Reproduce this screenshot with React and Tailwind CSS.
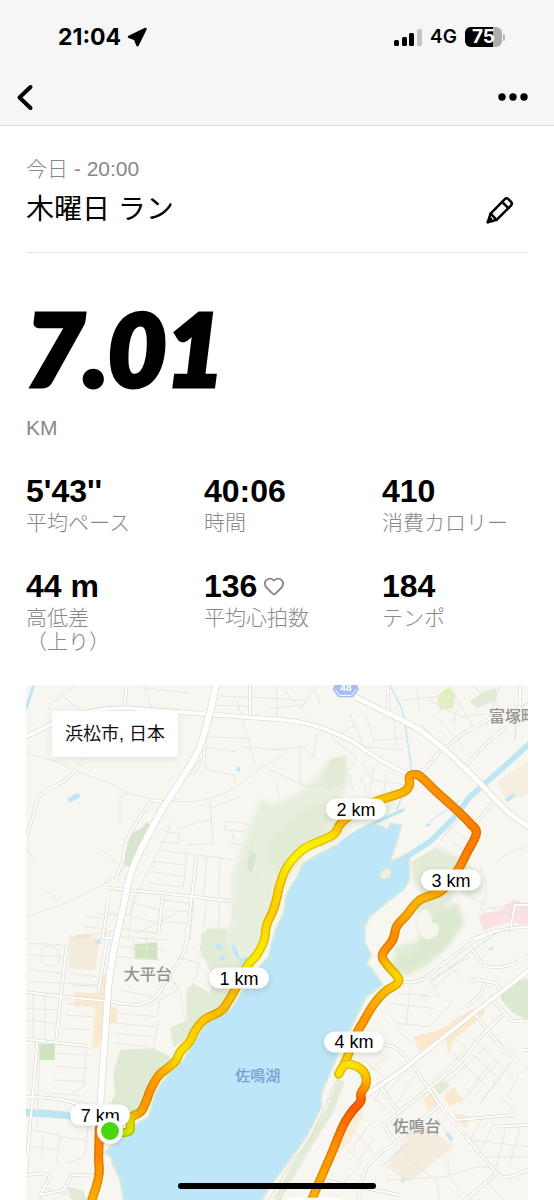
import React from "react";
import { Heart } from "lucide-react";

const stats = [
  { label: "平均ペース", value: "5'43''" },
  { label: "時間", value: "40:06" },
  { label: "消費カロリー", value: "410" },
  { label: "高低差（上り）", value: "44 m" },
  { label: "平均心拍数", value: "136", heart: true },
  { label: "テンポ", value: "184" },
];

// Map drawing units: three per pixel at the base width.
const VIEW = { x: 18, y: 15, w: 1506, h: 1545 };

const outbound = [
  [310, 1358, "#b4e00a"], [330, 1350, "#c8e600"], [333, 1314, "#e8dc00"], [362, 1295, "#f5a800"],
  [378, 1265, "#fd9a00"], [392, 1228, "#ff9200"], [416, 1187, "#ff9f00"], [446, 1162, "#fbb800"],
  [466, 1144, "#f8cc00"], [482, 1114, "#fbdf00"], [508, 1086, "#ffd800"], [528, 1048, "#ffd000"],
  [555, 1018, "#ffc800"], [602, 993, "#fdb900"], [626, 962, "#fdb900"], [650, 920, "#fdc000"],
  [682, 858, "#fbe800"], [710, 825, "#fde800"], [732, 782, "#ffe600"], [740, 735, "#ffd800"],
  [760, 690, "#ffd000"], [770, 655, "#ffd000"], [778, 620, "#ffd200"], [795, 572, "#ffdc00"],
  [822, 534, "#fff000"], [862, 500, "#fff200"], [938, 465, "#ffe400"], [967, 425, "#fdb900"],
  [1030, 382, "#fdb900"], [1080, 360, "#ffc800"], [1148, 337, "#fdb900"], [1168, 316, "#fdb000"],
  [1168, 292, "#fda800"], [1180, 284, "#ffa000"], [1202, 290, "#ff9a00"], [1250, 336, "#ff9200"],
  [1310, 390, "#ff8a00"], [1350, 430, "#ff8200"], [1369, 460, "#ff7a00"], [1340, 520, "#ff7c00"],
  [1312, 572, "#ff8a00"], [1265, 632, "#ffa000"], [1200, 660, "#fdb400"], [1160, 705, "#fdac00"],
  [1130, 740, "#fd9800"], [1118, 780, "#ff8a00"], [1087, 825, "#ff9400"], [1102, 855, "#fdb400"],
  [1134, 893, "#fdd600"], [1130, 912, "#fdce00"], [1094, 936, "#fdbc00"], [1060, 975, "#fdac00"],
  [1030, 1025, "#ff9800"], [1008, 1065, "#ffa000"], [978, 1140, "#fdcc00"], [956, 1182, "#fbe000"],
];

const homebound = [
  [956, 1182, "#fbe000"], [975, 1155, "#fbe000"], [1008, 1158, "#fde400"], [1034, 1180, "#fdd000"],
  [1038, 1212, "#fdb400"], [1023, 1240, "#ff8a00"], [1022, 1264, "#ff6a00"], [995, 1296, "#ff5a00"],
  [968, 1340, "#ff7000"], [935, 1420, "#ff9200"], [900, 1500, "#ffa400"], [873, 1565, "#ffb000"],
];

const finish = [
  [238, 1345, "#ff8a00"], [236, 1430, "#ff8600"], [236, 1490, "#ff9800"], [214, 1565, "#ffac00"],
];

const minorRoads = [
  // north-west hills
  "M18 215C60 240 100 235 130 255C180 290 260 290 310 335C400 365 460 365 520 365C600 355 660 320 700 280L790 225",
  "M85 90C90 60 150 40 165 15M130 50L185 95M370 15L400 100M380 25L510 40M600 48L770 55M590 75L700 80",
  "M690 15V110M770 15V115M650 60L705 250M665 200L790 210M555 170L690 175M540 200L650 215",
  "M555 245L560 270L640 285L650 310M18 710C120 680 240 630 310 570M245 510L310 565M75 628L115 665",
  "M300 430V350L330 340M18 500L45 545M440 410L480 445L540 425L575 420M570 365L580 490M575 385L660 350",
  // terraces
  "M450 430L440 470L400 540L350 640L330 700M430 455L480 460L475 490L420 485M415 510L500 520L490 620L385 610",
  "M400 545L495 555M395 575L490 590M500 520L640 540M560 530L550 650M600 535L595 655M500 495L580 490",
  "M615 425L680 430L675 455L615 450ZM640 460L635 490L665 493M340 650L325 780M430 660L510 670M520 660L510 780",
  "M435 690L500 695M435 725L500 730M560 660L550 745M600 665L595 750M640 670L635 740M230 700L330 705M180 770L330 745",
  "M345 670L420 690M335 710L420 730M330 750L415 760M200 710L245 715M190 740L245 745",
  // west side
  "M30 790L130 795M30 825L130 830M30 870L130 880M30 905L245 915M40 945V1080M75 945V1080M18 985L120 990",
  "M18 1020L115 1030M150 880L230 890M155 915L240 920M140 970L225 975M135 1005L220 1010M130 1045L215 1050",
  "M110 1120L210 1125M110 1160L205 1165M100 1200L200 1205M90 1240L180 1245M200 1100L190 1220L150 1245",
  "M70 1260C130 1250 190 1260 240 1290M60 1090L50 1340M30 1350L120 1365L110 1450M70 1365L65 1430M30 1400L115 1410",
  "M120 1370L200 1380M205 1330L195 1430L140 1450M60 1520L200 1560M90 1480L60 1560M65 815C65 790 120 790 120 835C120 865 65 865 65 835Z",
  "M290 830L420 840M310 870L410 880M290 1000L410 1010M290 1030L405 1040M285 1060L400 1070M280 1090L390 1100",
  "M410 1010L420 960L470 930M400 1110L415 1020M300 770L440 780M300 800L430 810M340 770V830M380 770V830M440 880C500 940 480 980 500 1030",
  "M470 830L540 850L520 900M520 800L545 830M300 930L400 950M350 760L470 700",
  // north centre
  "M750 55L860 60M790 30L870 110M750 85L850 75L880 30M880 15L900 75M990 100L1030 200L1150 210M1040 110L1060 180L1150 175",
  "M1010 130L950 170M930 170L1010 230L990 270M1120 100L1130 200M1150 60L1250 50M1190 30L1200 100M1250 110L1330 200M1200 130L1300 230",
  "M1230 60L1320 110L1400 100M1300 40L1360 140M1360 20L1440 80M1440 20L1400 140M1480 60L1500 140M1320 60L1300 130",
  "M1025 250L1060 300L1160 315M1020 290L1040 340M1060 260L1050 330M1100 280L1090 350M980 260L1000 330M750 210L850 200L890 240M750 270L860 320L930 310",
  "M760 300L780 350M840 200V320M890 160L880 230M1270 460L1340 520M1290 440L1350 490M1250 490L1320 550M1310 420L1260 480M1340 400L1280 460",
  "M1380 560C1410 620 1400 660 1380 690L1500 670M1430 550C1450 520 1490 510 1520 500M1350 650L1430 690M1390 700L1500 700M1470 680V760",
  // south-east
  "M1100 990L1130 1030L1230 1040L1300 960M1130 940L1250 950M1110 970L1240 985M1170 920L1160 1030M1230 900L1260 950M1200 960L1290 880M1270 840L1330 900",
  "M1230 900L1350 830M1050 1100L1110 1140M1030 1140L1090 1190M1010 1200L1060 1160M1090 1130L1040 1190M1120 1190L1060 1260M1190 1100L1130 1050",
  "M1160 1170L1100 1240M1180 1190L1130 1270M1240 1210L1200 1260M1270 1090L1400 1220M1300 1070L1440 1200M1330 1050L1480 1190M1340 1110L1240 1200",
  "M1400 1100L1280 1210M1440 1140L1320 1270M1400 1050L1500 1140M1410 1150L1340 1240M1460 1250L1500 1180L1524 1160M1440 1250L1490 1300",
  "M1250 1310L1300 1390M1390 1310L1350 1380M1420 1330L1380 1420M1460 1330L1430 1460M1500 1340L1470 1450M1350 1380L1524 1400M1380 1430L1524 1430",
  "M1150 1430L1250 1500L1260 1560M1290 1430C1270 1480 1300 1520 1360 1560M1100 1500L1280 1490C1340 1470 1400 1440 1440 1480M1400 1500L1450 1560",
  "M1050 1330L1000 1400M1060 1380L1010 1450M1030 1440L980 1500M1000 1350L1060 1420M980 1410L1020 1440M1100 1290L1050 1240",
];

const streets = [
  "M320 15L312 95M690 15L690 110M190 230C190 250 160 280 130 305C80 330 50 340 45 380C40 420 25 440 18 480",
  "M555 170L552 235L520 275L505 280M435 370C410 355 395 360 385 375C360 410 330 450 315 495L312 530L290 590",
  "M530 530L500 780M258 622L320 630L430 640L520 650L632 663M428 645L415 765M265 655L248 775H285",
  "M265 755L235 935M18 936L130 950L260 963C330 975 380 990 420 935C450 870 490 850 500 780V750M140 792L108 1085",
  "M18 1078L202 1098M52 1085L18 1480M18 1250C80 1250 170 1260 200 1290M18 1485L75 1480L90 1490L60 1545L130 1530L155 1485L220 1487",
  "M1105 15V100M1170 285C1220 275 1230 250 1260 215L1330 160L1420 110M1335 260L1400 190L1460 140M1500 15L1500 110M1420 370L1360 435",
  "M1150 905C1200 915 1220 890 1260 860L1345 795C1370 775 1400 765 1430 750M1345 795L1390 855C1430 870 1480 860 1524 825",
  "M1350 780C1400 760 1440 745 1524 740M1472 740L1485 675H1524M1345 910L1370 898L1430 910L1440 930M1395 910L1385 940L1340 980",
  "M1410 950L1475 1022H1524M1360 995L1475 1145M1450 1005L1390 1060C1350 1110 1330 1150 1270 1190L1090 1335L1125 1385",
  "M1090 1095C1130 1095 1150 1120 1180 1160L1270 1290L1430 1480C1450 1500 1480 1490 1524 1470M1085 1225L1135 1295",
  "M1265 1270L1125 1390C1060 1430 1020 1460 1015 1560M1310 1320L1480 1305M1425 1340L1524 1335M1430 1480L1330 1565M1510 1110H1524M910 1500L1140 1545",
];

const mainRoads = [
  { d: "M18 170L90 135C180 100 240 80 320 85C450 92 560 105 780 118C880 130 920 145 1000 185C1060 230 1110 260 1170 285", w: 11 },
  { d: "M1005 50C1080 90 1130 110 1200 150C1280 210 1310 240 1400 330C1450 390 1490 420 1535 445", w: 15 },
  { d: "M1015 1262L1160 1160L1380 985L1535 865", w: 11 },
];

function mixColor(a, b, t) {
  const channel = (hex, i) => parseInt(hex.slice(1 + i * 2, 3 + i * 2), 16);
  return "rgb(" + [0, 1, 2].map((i) => Math.round(channel(a, i) * (1 - t) + channel(b, i) * t)).join(",") + ")";
}

// Catmull-Rom subdivision of a coloured polyline.
function smooth(points, steps = 6) {
  const out = [];
  for (let i = 0; i < points.length - 1; i++) {
    const p0 = points[Math.max(i - 1, 0)];
    const p1 = points[i];
    const p2 = points[i + 1];
    const p3 = points[Math.min(i + 2, points.length - 1)];
    for (let s = 0; s < steps; s++) {
      const t = s / steps;
      const at = (k) =>
        0.5 * (2 * p1[k] + (p2[k] - p0[k]) * t + (2 * p0[k] - 5 * p1[k] + 4 * p2[k] - p3[k]) * t * t +
          (3 * p1[k] - p0[k] - 3 * p2[k] + p3[k]) * t * t * t);
      out.push([at(0).toFixed(1), at(1).toFixed(1), mixColor(p1[2], p2[2], t)]);
    }
  }
  const last = points[points.length - 1];
  out.push([last[0], last[1], mixColor(last[2], last[2], 0)]);
  return out;
}

function Segments({ points, width }) {
  return points.slice(1).map((p, i) => (
    <path key={i} d={`M${points[i][0]} ${points[i][1]}L${p[0]} ${p[1]}`} stroke={p[2]} strokeWidth={width} />
  ));
}

function Route({ points }) {
  const curve = smooth(points);
  const d = "M" + curve.map((p) => `${p[0]} ${p[1]}`).join("L");
  return (
    <g fill="none" strokeLinecap="round" strokeLinejoin="round">
      <Segments points={curve} width={27} />
      <path d={d} stroke="#5a4a00" strokeOpacity="0.22" strokeWidth="27" />
      <Segments points={curve} width={18} />
    </g>
  );
}

function MapDrawing() {
  return (
    <svg className="block w-full" viewBox={`${VIEW.x} ${VIEW.y} ${VIEW.w} ${VIEW.h}`} aria-hidden="true">
      <rect x="0" y="0" width="1600" height="1600" fill="#f7f6f0" />
      <defs>
        <filter id="soft" x="-10%" y="-10%" width="120%" height="120%">
          <feGaussianBlur stdDeviation="7" />
        </filter>
      </defs>

      {/* parks and woodland */}
      <g fill="#e1ebd6">
        <path d="M720 360L760 370L820 350L880 300L930 235L975 230L985 300L960 370L1100 340L1130 370L1100 400L1000 430L960 480L860 520L790 620L760 700L740 780L700 850L640 860L600 830L545 800L560 750L635 740L640 580L665 500Z" fill="#e9efdf" filter="url(#soft)" />
        <path d="M750 480L790 440L850 390L900 370L930 420L880 490L800 540L770 570L740 520Z" filter="url(#soft)" />
        <path d="M935 235L980 228L975 310L920 330L910 290Z" />
        <path d="M380 425L395 440L345 555L312 560L315 520L335 460L365 445Z" fill="#d9e6cd" />
        <path d="M690 510L710 525L695 580L680 560Z" fill="#d9e6cd" />
        <path d="M545 760L600 745L640 830L690 860L640 930L620 970L570 1000L530 1060L460 1100L450 1045L500 1020L500 930L520 910L570 940L580 900L560 850L540 810Z" />
        <path d="M300 1110L400 1105L450 1130L470 1145L420 1190L390 1240L370 1290L335 1305L300 1275H272L285 1240L280 1180Z" fill="#dfe9d4" />
        <path d="M1170 520L1240 500L1330 540L1380 580L1385 630L1350 650L1310 625L1280 680L1330 730L1290 790L1230 850L1160 890L1115 860L1130 800L1200 780L1190 690L1210 650L1180 600Z" filter="url(#soft)" />
        <path d="M1250 700L1310 670L1330 720L1280 800L1220 840L1150 880L1115 845L1180 820L1210 770Z" fill="#dce9d0" filter="url(#soft)" />
        <path d="M1190 710C1210 670 1240 690 1235 730C1260 720 1270 760 1235 775C1215 790 1190 760 1190 710Z" fill="#f6f5ee" />
        <path d="M1443 930L1480 905L1524 895V1020L1480 1000L1443 960Z" fill="#dce9d2" />
        <path d="M1240 1220L1270 1202L1290 1215L1258 1245Z" />
        <path d="M1350 65L1390 35L1430 25V60L1370 85Z" />
        <path d="M1250 50L1285 20L1305 40L1300 85L1260 90Z" fill="#e4edc4" />
        <path d="M345 792L412 787V838H345ZM58 1092H104V1140H58Z" fill="#cfe3c0" />
        <path d="M140 1520L190 1530L200 1560H155Z" />
        <path d="M560 745L620 750L615 780H560Z" />
      </g>

      {/* built-up blocks */}
      <g fill="#fbe9cd">
        <path d="M240 885H258V970L290 985V1030H262L235 1102H217L225 980L165 978L162 936L235 940Z" />
        <path d="M1180 1070L1260 1050L1350 990L1390 980L1395 1000L1300 1080L1285 1125L1275 1060L1200 1115Z" />
        <path d="M1210 1260L1240 1230L1260 1270L1225 1290ZM1270 1250L1300 1220L1330 1260L1290 1280ZM1300 1300L1350 1310L1335 1345Z" />
        <path d="M960 1300L1020 1270L1030 1300L990 1390L950 1420Z" fillOpacity="0.6" />
      </g>
      <path d="M150 765L240 775L225 870L145 865Z" fill="#f4ebdf" />
      <path d="M1165 1360L1225 1340L1300 1400L1165 1508L1100 1460Z" fill="#f5ece0" />
      <path d="M1430 310L1524 240V345L1460 360Z" fill="#f6eee0" />
      <path d="M1375 705L1440 690L1480 660L1524 670V735L1470 725L1390 750Z" fill="#fbe1e2" />
      <path d="M170 765L210 760V775H165Z" fill="#f6e1cd" />

      {/* lake banks and water */}
      <path d="M1090 440L1150 340L1200 310L1345 440L1250 500L1150 560ZM1170 620L1110 670L1060 700L1030 740L1030 800L1055 860L1085 915L1030 960L990 1030L955 1110L905 1240L900 1280L860 1370L800 1450L750 1520L740 1560H850L930 1380L1020 1240L1030 1180L990 1150L1130 900L1100 830L1120 750L1180 670Z" fill="#f8f6f0" />
      <path d="M965 1200L930 1290L850 1420L770 1560" fill="none" stroke="#e3ecd9" strokeWidth="22" />
      <path d="M955 1190L905 1300L870 1380L820 1440L745 1560" fill="none" stroke="#e6dccb" strokeWidth="3" />
      <g fill="#bde6f8">
        <path d="M1090 440L1050 431L990 468L965 487L900 520L850 550L825 600L800 640L790 700L770 740L760 770L745 830L700 880L675 920L650 960L635 985L560 1030L520 1090L490 1140L440 1190L410 1230L385 1312L350 1330L320 1355L252 1418L272 1430L280 1460L300 1500L312 1570H720L760 1505L810 1440L860 1370L905 1280V1240L930 1180L955 1120L1000 1030L1040 950L1088 915L1060 870L1040 850L1055 825L1035 790V740L1050 710L1110 660L1150 630L1168 600V520L1110 543L1130 490L1145 435L1110 430L1102 450Z" stroke="#dcebd8" strokeWidth="5" />
        <path d="M585 795L600 790L608 805L595 812ZM595 830L615 825L610 840H598ZM635 790L650 805L660 840L640 825ZM655 835L690 830L680 855H660Z" />
        <path d="M143 355L175 338L182 350L148 369ZM650 262H660V273H650ZM225 782L242 780V792L228 790ZM1275 1360L1285 1355L1300 1378L1290 1384ZM1142 1502L1152 1490L1158 1497L1148 1508ZM1405 808L1418 800L1420 806L1409 813ZM1455 358L1480 340L1485 347L1463 367ZM1213 436L1230 428L1232 436L1218 440Z" />
      </g>
      <path d="M1078 590C1080 570 1100 560 1112 567C1120 580 1108 598 1090 600Z" fill="#ecefda" stroke="#d5e3cf" strokeWidth="3" />
      <g fill="none" stroke="#bde6f5" strokeLinecap="round">
        <path d="M1160 530L1230 485L1305 410L1350 350L1430 280L1535 185" strokeWidth="17" />
        <path d="M965 487L1010 455L1080 420L1150 390" strokeWidth="9" />
        <path d="M1110 15C1130 60 1150 80 1155 130C1162 180 1170 230 1175 275L1130 390" strokeWidth="4" />
        <path d="M1230 425L1320 360M1440 750L1240 900M1535 60L1490 90L1485 180M1160 1395L1085 1460M1380 1270L1470 1150" strokeWidth="3" />
        <path d="M10 1297C80 1300 150 1308 245 1312" strokeWidth="22" />
        <path d="M18 85L40 20" strokeWidth="9" />
      </g>

      {/* road network */}
      <g fill="none" strokeLinejoin="round">
        <g stroke="#e8e6df" strokeWidth="3">
          {minorRoads.map((d) => <path key={d} d={d} />)}
          <path d="M690 505C690 470 730 455 760 470M710 590C720 545 770 530 760 570C730 620 740 650 755 680M1260 640C1270 600 1320 600 1330 640" />
        </g>
        <g stroke="#dbd9d2" strokeWidth="10">
          {streets.map((d) => <path key={d} d={d} />)}
        </g>
        <g stroke="#ffffff" strokeWidth="6">
          {streets.map((d) => <path key={d} d={d} />)}
        </g>
        {mainRoads.map((r) => <path key={r.d} d={r.d} stroke="#dcdad4" strokeWidth={r.w + 4} />)}
        {mainRoads.map((r) => <path key={r.d} d={r.d} stroke="#ffffff" strokeWidth={r.w} />)}
        <path d="M590 10C575 80 565 130 540 200C510 270 460 330 420 400C370 490 330 560 318 640C300 740 280 780 265 920C255 1060 245 1200 236 1345" stroke="#dcdad4" strokeWidth="22" />
        <path d="M590 10C575 80 565 130 540 200C510 270 460 330 420 400C370 490 330 560 318 640C300 740 280 780 265 920C255 1060 245 1200 236 1345" stroke="#ffffff" strokeWidth="18" />
      </g>

      {/* route shield */}
      <path d="M940 28L956 -10H998L1014 28L998 50H956Z" fill="#a5bdf0" stroke="#a5bdf0" strokeWidth="4" strokeLinejoin="round" />
      <path d="M945 28L959 46H995L1009 28" fill="none" stroke="#ffffff" strokeWidth="3" />
      <text x="977" y="34" textAnchor="middle" fill="#ffffff" fontFamily="Inter, sans-serif" fontWeight="700" fontSize="27">48</text>

      <Route points={outbound} />
      <Route points={homebound} />
      <Route points={finish} />

      <rect x="789" y="1553" width="180" height="62" rx="31" fill="#ffffff" />
    </svg>
  );
}

function place(x, y) {
  return { left: `${((x - VIEW.x) / VIEW.w) * 100}%`, top: `${((y - VIEW.y) / VIEW.h) * 100}%` };
}

const pins = [
  { text: "1 km", x: 657, y: 894 },
  { text: "2 km", x: 1008, y: 388 },
  { text: "3 km", x: 1293, y: 600 },
  { text: "4 km", x: 1002, y: 1085 },
  { text: "7 km", x: 241, y: 1306 },
];

const places = [
  { text: "大平台", x: 383, y: 884 },
  { text: "佐鳴台", x: 1190, y: 1341 },
  { text: "富塚町", x: 1479, y: 112 },
];

function RouteMap() {
  return (
    <section aria-label="ルートマップ" className="relative overflow-hidden rounded-t-[4px]">
      <MapDrawing />
      {places.map((p) => (
        <span key={p.text} style={place(p.x, p.y)} className="absolute -translate-x-1/2 -translate-y-1/2 text-base leading-5 font-medium whitespace-nowrap text-[#929290]">
          {p.text}
        </span>
      ))}
      <span style={place(713, 1188)} className="absolute -translate-x-1/2 -translate-y-1/2 text-[15px] leading-5 font-medium whitespace-nowrap text-[#769fd0]">
        佐鳴湖
      </span>
      {pins.map((p) => (
        <span key={p.text} style={place(p.x, p.y)} className="absolute flex h-[21px] w-[60px] -translate-x-1/2 -translate-y-1/2 items-center justify-center rounded-full bg-white text-lg leading-5 whitespace-nowrap text-black shadow-[0_2px_6px_rgba(0,0,0,0.14)]">
          {p.text}
        </span>
      ))}
      <span style={place(269, 1353)} className="absolute size-[26px] -translate-x-1/2 -translate-y-1/2 rounded-full border-4 border-white bg-[#4bd613] shadow-[0_1px_4px_rgba(0,0,0,0.16)]" />
      <p className="absolute top-[26px] left-[26px] flex h-[46px] w-[126px] items-center justify-center rounded-[4px] bg-white text-lg text-[#111] shadow-[0_2px_8px_rgba(0,0,0,0.08)]">
        浜松市, 日本
      </p>
    </section>
  );
}

function StatusBar() {
  return (
    <div className="flex h-[74px] items-center justify-between pr-[49px] pl-[58px] font-['Inter',sans-serif]">
      <div className="flex items-center gap-1.5">
        <span className="text-[23px] leading-7 font-bold">21:04</span>
        <svg className="size-5" viewBox="0 0 20 20" aria-hidden="true">
          <path d="M18.500 2L2 9.800L8 12L10.500 18.200Z" fill="#000" stroke="#000" strokeWidth="2.500" strokeLinejoin="round" />
        </svg>
      </div>
      <div className="flex items-center gap-2">
        <svg className="h-[19px] w-7" viewBox="0 0 28 19" aria-hidden="true">
          <rect x="0" y="12" width="5" height="6" rx="1.500" />
          <rect x="8" y="9" width="5" height="9" rx="1.500" />
          <rect x="15" y="5" width="5" height="13" rx="1.500" />
          <rect x="23" y="1" width="5" height="17" rx="1.500" fill="#c4c4c4" />
        </svg>
        <span className="text-[19px] leading-6 font-semibold">4G</span>
        <div className="flex items-center gap-px">
          <div className="relative flex h-5 w-[37px] items-center justify-center rounded-[6px] bg-[#adadad]">
            <span className="absolute inset-y-0 left-0 w-7 rounded-l-[6px] bg-black" />
            <span className="relative text-[19px] leading-5 font-bold text-white">75</span>
          </div>
          <span className="h-[7px] w-[2px] rounded-r-full bg-[#b5b5b5]" />
        </div>
      </div>
    </div>
  );
}

export default function App() {
  return (
    <main className="bg-white font-['Liberation_Sans','Noto_Sans_CJK_JP',sans-serif] text-black" lang="ja">
      <header className="border-b border-[#e0e0e0] bg-[#f6f6f6]">
        <StatusBar />
        <nav className="flex h-[51px] items-start justify-between px-4 pt-2">
          <button type="button" aria-label="戻る" className="flex h-[30px] w-5 items-center">
            <svg className="h-[30px] w-5" viewBox="0 0 20 30" fill="none" aria-hidden="true">
              <path d="M14.500 5L3.500 15.500L14.500 26" stroke="#000" strokeWidth="4" strokeLinecap="round" strokeLinejoin="round" />
            </svg>
          </button>
          <button type="button" aria-label="その他" className="flex h-[30px] items-center pr-[10px]">
            <svg className="h-2 w-[30px]" viewBox="0 0 30 8" aria-hidden="true">
              <circle cx="4" cy="4" r="3.700" />
              <circle cx="15" cy="4" r="3.700" />
              <circle cx="26" cy="4" r="3.700" />
            </svg>
          </button>
        </nav>
      </header>

      <div className="px-[26px]">
        <div className="border-b border-[#e2e2e2] pt-[31px] pb-[22px]">
          <p className="text-[21px] leading-6 font-light text-[#888]">今日 - 20:00</p>
          <div className="mt-[9px] flex items-center justify-between pr-[14px]">
            <h1 className="text-[28px] leading-10">木曜日 ラン</h1>
            <button type="button" aria-label="タイトルを編集" className="size-7">
              <svg className="size-7" viewBox="0 0 28 28" fill="none" stroke="#000" strokeWidth="2.500" strokeLinejoin="round" strokeLinecap="round" aria-hidden="true">
                <path d="M1.800 26.200L4.600 17.600L18.600 3.300Q20.600 1.300 22.600 3.300L24.900 5.600Q26.900 7.600 24.900 9.600L10.600 23.800Z" />
                <path d="M16.200 6L22.300 12.100M4.600 17.600L10.600 23.800M1.800 26.200L5 22.800" />
              </svg>
            </button>
          </div>
        </div>

        <p className="mt-[39px] font-['Lato',sans-serif] text-[100px] leading-[110px] font-black italic [-webkit-text-stroke:5px_#000]">7.01</p>
        <p className="mt-[14px] text-[21px] leading-6 font-light text-[#888]">KM</p>

        <dl className="mt-[33px] grid grid-cols-3 gap-x-8 gap-y-[33px]">
          {stats.map((s) => (
            <div key={s.label} className="flex flex-col-reverse justify-end gap-[2px]">
              <dt className="pr-4 text-[21px] leading-6 font-light break-keep text-[#888] [text-spacing-trim:space-all]">{s.label}</dt>
              <dd className="flex items-center gap-1.5 text-[32px] leading-9 font-bold">
                {s.value}
                {s.heart && <Heart className="size-[22px] text-[#888]" strokeWidth={2} aria-hidden="true" />}
              </dd>
            </div>
          ))}
        </dl>

        <div className="mt-[31px]">
          <RouteMap />
        </div>
      </div>

      <div className="fixed bottom-[11px] left-1/2 h-[6px] w-[198px] -translate-x-1/2 rounded-full bg-black" aria-hidden="true" />
    </main>
  );
}
